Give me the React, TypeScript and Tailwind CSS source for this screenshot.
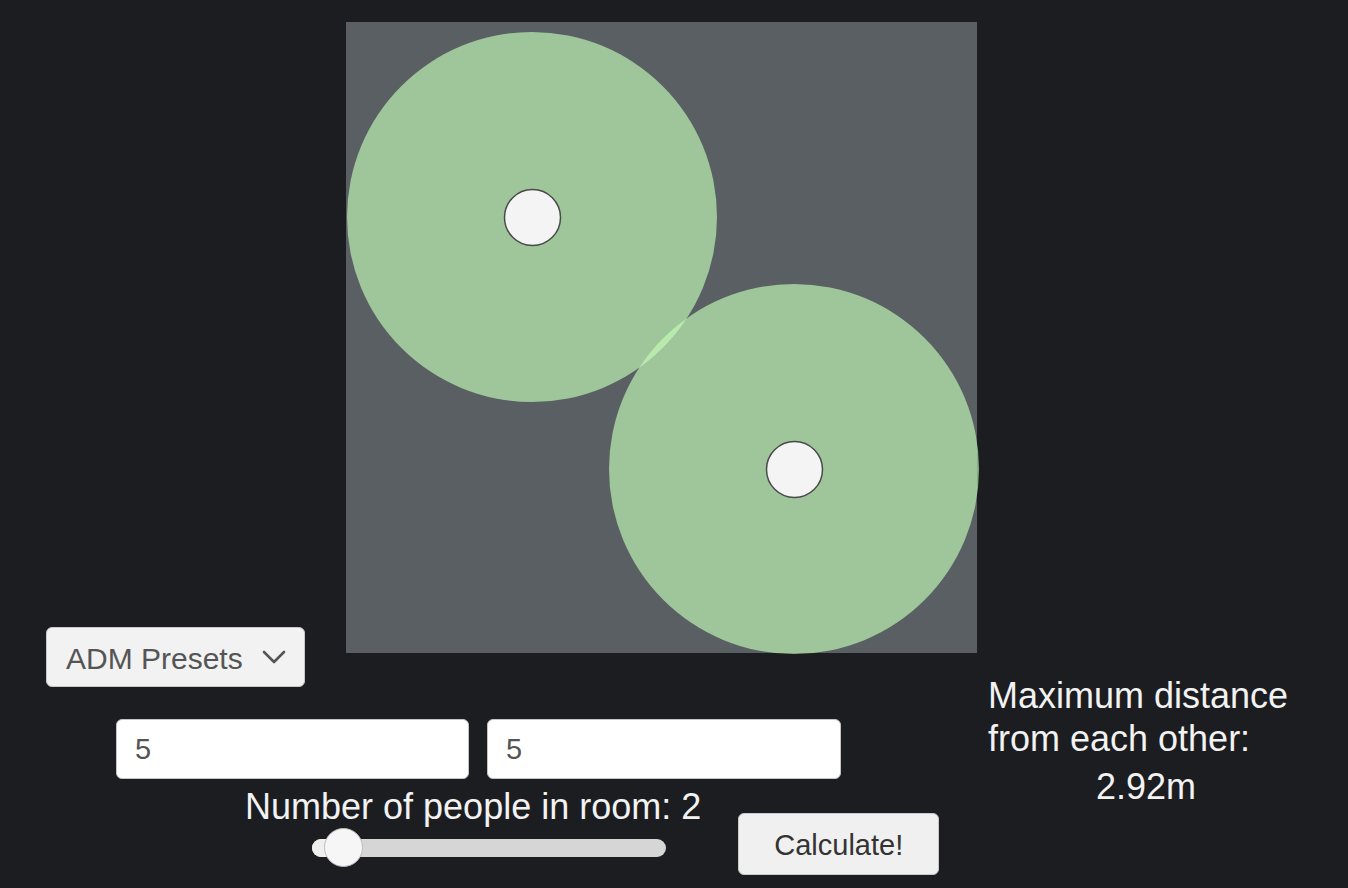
import React from "react";

const font = { fontFamily: '"Liberation Sans", Arial, sans-serif' };

const Room: React.FC = () => {
  const people = [
    { x: 186, y: 195 },
    { x: 448, y: 447 },
  ];
  return (
    <div className="relative w-[631px] h-[631px] bg-[#5a5f63]">
      <svg width="631" height="631" viewBox="0 0 631 631" className="overflow-visible">
        {people.map((p, i) => (
          <circle key={"r" + i} cx={p.x} cy={p.y} r={185} fill="rgb(198,255,186)" fillOpacity={0.64} />
        ))}
        {people.map((p, i) => (
          <circle key={"d" + i} cx={p.x + 0.5} cy={p.y + 0.5} r={28} fill="#f4f4f4" stroke="#4a4a4a" strokeWidth={1.5} />
        ))}
      </svg>
    </div>
  );
};

const Slider: React.FC = () => (
  <div className="relative w-[354px] h-[39px] flex items-center">
    <div className="w-full h-[18px] rounded-full bg-[#d6d6d6] flex">
      <div className="w-[24px] h-full rounded-l-full bg-[#efefef]" />
    </div>
    <div className="absolute left-[12px] top-0 w-[39px] h-[39px] rounded-full bg-[#f6f6f6] border border-[#bdbdbd]" />
  </div>
);

export default function App() {
  return (
    <div className="w-full h-[888px] bg-[#1c1d21] overflow-hidden" style={font}>
      <div className="flex h-[653px]">
        <div className="w-[346px] pl-[46px] pt-[605px]">
          <button className="w-[259px] h-[60px] mt-[22px] flex items-center justify-between pl-[19px] pr-[18px] pt-[3px] bg-[#f2f2f2] border border-[#c8c8c8] rounded-[6px] text-[30px] text-[#555]">
            <span>ADM Presets</span>
            <svg width="24" height="14" viewBox="0 0 24 14" className="-mt-[3px]">
              <polyline points="2,2 12,12 22,2" fill="none" stroke="#555" strokeWidth="2.6" strokeLinecap="round" strokeLinejoin="round" />
            </svg>
          </button>
        </div>
        <div className="pt-[22px]">
          <Room />
        </div>
      </div>
      <div className="flex">
        <div className="w-[977px]">
          <div className="flex gap-[18px] pl-[116px] pt-[66px]">
            <input
              defaultValue="5"
              className="w-[353px] h-[60px] pl-[18px] bg-white border border-[#c4c4c4] rounded-[6px] text-[29px] text-[#555] outline-none"
            />
            <input
              defaultValue="5"
              className="w-[354px] h-[60px] pl-[18px] bg-white border border-[#c4c4c4] rounded-[6px] text-[29px] text-[#555] outline-none"
            />
          </div>
          <div className="flex pl-[245px] pt-[6px]">
            <div className="flex flex-col">
              <div className="text-[36px] leading-[43px] text-[#f2f2f2] whitespace-nowrap">Number of people in room: 2</div>
              <div className="pl-[67px]">
                <Slider />
              </div>
            </div>
            <button className="ml-[37px] mt-[28px] w-[201px] h-[62px] pt-[3px] bg-[#f0f0f0] border border-[#c8c8c8] rounded-[6px] text-[29px] text-[#333]">
              Calculate!
            </button>
          </div>
        </div>
        <div className="w-[315px] pl-[11px] pt-[21px] text-[36px] leading-[43px] text-[#f2f2f2]">
          <div>Maximum distance from each other:</div>
          <div className="pl-[108px] mt-[5px]">2.92m</div>
        </div>
      </div>
    </div>
  );
}
